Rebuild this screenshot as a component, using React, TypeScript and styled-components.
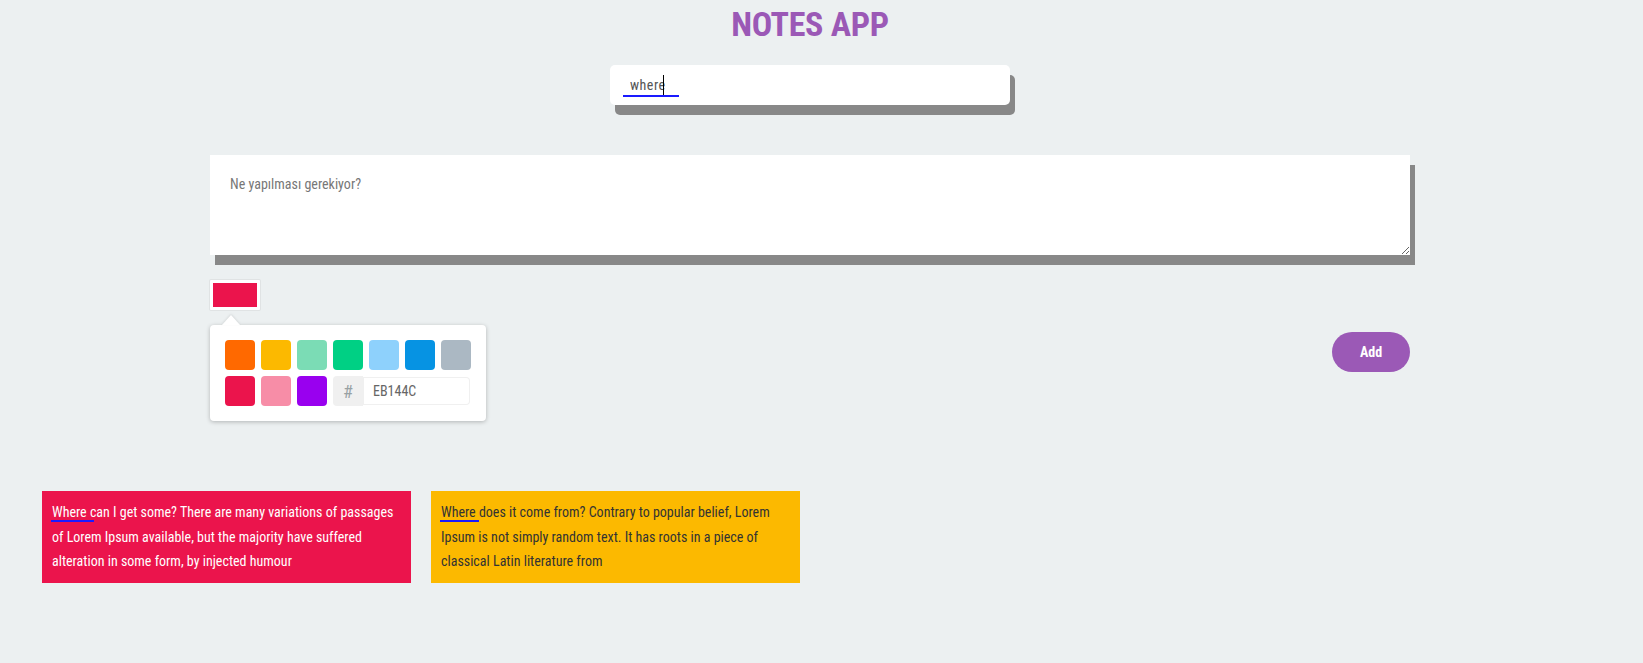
import React from "react";
import styled, { createGlobalStyle } from "styled-components";

const FONT = `"Roboto Condensed", "DejaVu Sans Condensed", sans-serif`;

const Global = createGlobalStyle`
  html, body { margin: 0; padding: 0; background: #ecf0f1; }
  body { font-family: ${FONT}; }
  * { box-sizing: border-box; }
`;

const Page = styled.div`
  width: 1620px;
  display: flex;
  flex-direction: column;
  align-items: center;
`;

const Title = styled.h1`
  margin: 0;
  padding-top: 4px;
  height: 42px;
  font-size: 34px;
  line-height: 40px;
  font-weight: 700;
  color: #9b59b6;
  letter-spacing: -0.3px;
`;

const SearchWrap = styled.div`
  position: relative;
  margin-top: 23px;
  width: 400px;
  height: 40px;
`;

const SearchInput = styled.input`
  width: 400px;
  height: 40px;
  border: none;
  border-radius: 5px;
  outline: none;
  padding: 0 20px;
  background: #fff;
  box-shadow: 5px 10px 0 #888;
  font-family: ${FONT};
  font-size: 14px;
  letter-spacing: 0.5px;
  color: #555;
`;

const Underline = styled.span`
  position: absolute;
  left: 13px;
  top: 30px;
  width: 56px;
  height: 2px;
  background: #1a1aff;
`;

const Caret = styled.span`
  position: absolute;
  left: 53px;
  top: 10px;
  width: 1px;
  height: 20px;
  background: #000;
`;

const Form = styled.div`
  margin-top: 50px;
  width: 1200px;
  display: flex;
  flex-direction: column;
`;

const TextArea = styled.textarea`
  width: 1200px;
  height: 100px;
  border: none;
  outline: none;
  padding: 21px 20px 20px 20px;
  background: #fff;
  box-shadow: 5px 10px 0 #888;
  font-family: ${FONT};
  font-size: 14px;
  color: #555;
  display: block;
  &::placeholder { color: #777; }
`;

const Controls = styled.div`
  margin-top: 25px;
  display: flex;
  align-items: center;
  justify-content: space-between;
`;

const PickerColumn = styled.div`
  display: flex;
  flex-direction: column;
  align-items: flex-start;
`;

const SwatchButton = styled.div`
  width: 50px;
  height: 30px;
  padding: 3px;
  background: #fff;
  border-radius: 1px;
  box-shadow: 0 0 0 1px rgba(0, 0, 0, 0.05);
`;

const SwatchFill = styled.div<{ $color: string }>`
  width: 100%;
  height: 100%;
  background: ${(p) => p.$color};
`;

const Popover = styled.div`
  position: relative;
  margin-top: 15px;
  width: 276px;
  background: #fff;
  border-radius: 4px;
  box-shadow: rgba(0, 0, 0, 0.25) 0 1px 4px;
  padding: 15px 9px 9px 15px;
  display: flex;
  flex-wrap: wrap;
`;

const Triangle = styled.div`
  position: absolute;
  top: -10px;
  left: 12px;
  width: 0;
  height: 0;
  border-style: solid;
  border-width: 0 9px 10px 9px;
  border-color: transparent transparent #fff transparent;
  filter: drop-shadow(0 -1px 1px rgba(0, 0, 0, 0.1));
`;

const Swatch = styled.div<{ $color: string }>`
  width: 30px;
  height: 30px;
  border-radius: 4px;
  margin: 0 6px 6px 0;
  background: ${(p) => p.$color};
`;

const Hash = styled.div`
  width: 30px;
  height: 30px;
  border-radius: 4px 0 0 4px;
  background: #f0f0f0;
  color: #98a1a4;
  font-size: 18px;
  display: flex;
  align-items: center;
  justify-content: center;
`;

const HexInput = styled.input`
  width: 107px;
  height: 28px;
  margin-top: 1px;
  border: none;
  outline: none;
  border-radius: 0 4px 4px 0;
  box-shadow: inset 0 0 0 1px #f0f0f0;
  padding-left: 10px;
  font-family: ${FONT};
  font-size: 14px;
  color: #666;
`;

const AddButton = styled.button`
  width: 78px;
  height: 40px;
  border: none;
  border-radius: 20px;
  background: #9b59b6;
  color: #fff;
  font-family: ${FONT};
  font-weight: 700;
  font-size: 14px;
  margin-top: 2px;
`;

const Notes = styled.div`
  align-self: stretch;
  margin-top: 70px;
  padding-left: 42px;
  display: flex;
  gap: 20px;
`;

const Note = styled.div<{ $bg: string; $fg: string }>`
  width: 369px;
  min-height: 91px;
  padding: 9px 10px 9px 10px;
  background: ${(p) => p.$bg};
  color: ${(p) => p.$fg};
  font-size: 14px;
  line-height: 24.5px;
`;

const MatchMark = styled.span<{ $width: number }>`
  display: inline-block;
  position: relative;
  width: 0;
  height: 0;
  &::after {
    content: "";
    position: absolute;
    left: -1px;
    top: 3px;
    width: ${(p) => p.$width}px;
    height: 2px;
    background: #1a1aff;
  }
`;

const COLORS = ["#FF6900", "#FCB900", "#7BDCB5", "#00D084", "#8ED1FC", "#0693E3", "#ABB8C3", "#EB144C", "#F78DA7", "#9900EF"];

export default function App() {
  return (
    <>
      <Global />
      <Page>
        <Title>NOTES APP</Title>
        <SearchWrap>
          <SearchInput defaultValue="where" />
          <Underline />
          <Caret />
        </SearchWrap>
        <Form>
          <TextArea placeholder="Ne yapılması gerekiyor?" />
          <Controls>
            <PickerColumn>
              <SwatchButton>
                <SwatchFill $color="#EB144C" />
              </SwatchButton>
              <Popover>
                <Triangle />
                {COLORS.map((c) => (
                  <Swatch key={c} $color={c} />
                ))}
                <Hash>#</Hash>
                <HexInput defaultValue="EB144C" />
              </Popover>
            </PickerColumn>
            <AddButton>Add</AddButton>
          </Controls>
        </Form>
        <Notes>
          <Note $bg="#EB144C" $fg="#ffffff">
            <MatchMark $width={43} />Where can I get some? There are many variations of passages of Lorem Ipsum available, but the majority have suffered alteration in some form, by injected humour
          </Note>
          <Note $bg="#FCB900" $fg="#333333">
            <MatchMark $width={39} />Where does it come from? Contrary to popular belief, Lorem Ipsum is not simply random text. It has roots in a piece of classical Latin literature from
          </Note>
        </Notes>
      </Page>
    </>
  );
}
